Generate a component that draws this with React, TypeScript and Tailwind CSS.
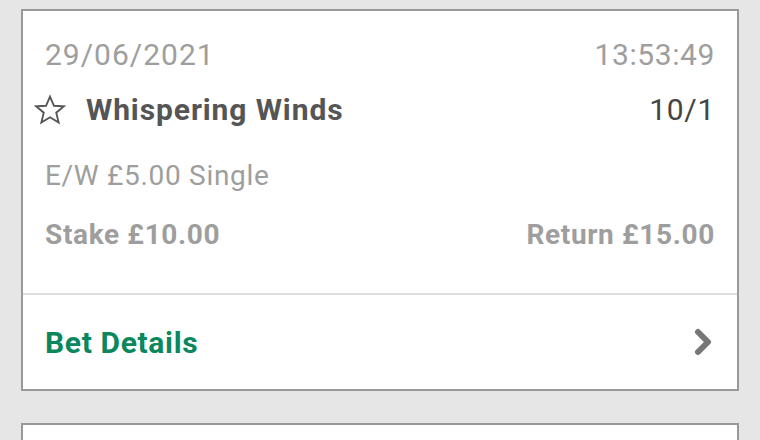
const Star = () => (
    <svg width="34" height="34" viewBox="0 0 24 24" className="shrink-0">
        <polygon
            points="12,2.5 14.8,9 21.8,9.4 16.4,13.9 18.1,20.8 12,17.1 5.9,20.8 7.6,13.9 2.2,9.4 9.2,9"
            fill="none"
            stroke="#555"
            strokeWidth="1.3"
            strokeLinejoin="miter"
        />
    </svg>
)

const Chevron = () => (
    <svg width="22" height="28" viewBox="0 0 22 28">
        <polyline points="5,4 15,14 5,24" fill="none" stroke="#777" strokeWidth="6" strokeLinejoin="round" strokeLinecap="round" />
    </svg>
)

const App = () => {
    return (
        <div className="w-[760px] h-[440px] overflow-hidden bg-[#e6e6e6] pt-[9px] px-[21px] font-['Roboto',sans-serif]">
            <div className="border-2 border-[#999] bg-white">
                <div className="px-[22px] pt-[24px] pb-[38px]">
                    <div className="flex justify-between text-[30px] leading-[40px] text-[#9e9e9e]">
                        <span className="tracking-[1px]">29/06/2021</span>
                        <span className="tracking-[0.6px]">13:53:49</span>
                    </div>
                    <div className="mt-[15px] flex items-center justify-between leading-[40px]">
                        <span className="flex items-center -ml-[12px]">
                            <Star />
                            <span className="ml-[19px] text-[30px] tracking-[0.9px] font-bold text-[#555]">Whispering Winds</span>
                        </span>
                        <span className="text-[30px] tracking-[0.7px] text-[#444]">10/1</span>
                    </div>
                    <div className="mt-[26px] text-[28px] tracking-[0.7px] leading-[40px] text-[#9e9e9e]">E/W £5.00 Single</div>
                    <div className="mt-[19px] flex justify-between text-[28px] tracking-[0.65px] leading-[40px] font-bold text-[#9e9e9e]">
                        <span>Stake £10.00</span>
                        <span>Return £15.00</span>
                    </div>
                </div>
                <div className="border-t-2 border-[#ddd] h-[96px] px-[22px] flex items-center justify-between">
                    <span className="text-[30px] tracking-[0.65px] font-bold text-[#0b875e]">Bet Details</span>
                    <Chevron />
                </div>
            </div>
            <div className="mt-[32px] h-[40px] border-2 border-[#999] bg-white"></div>
        </div>
    )
}

export default App;
